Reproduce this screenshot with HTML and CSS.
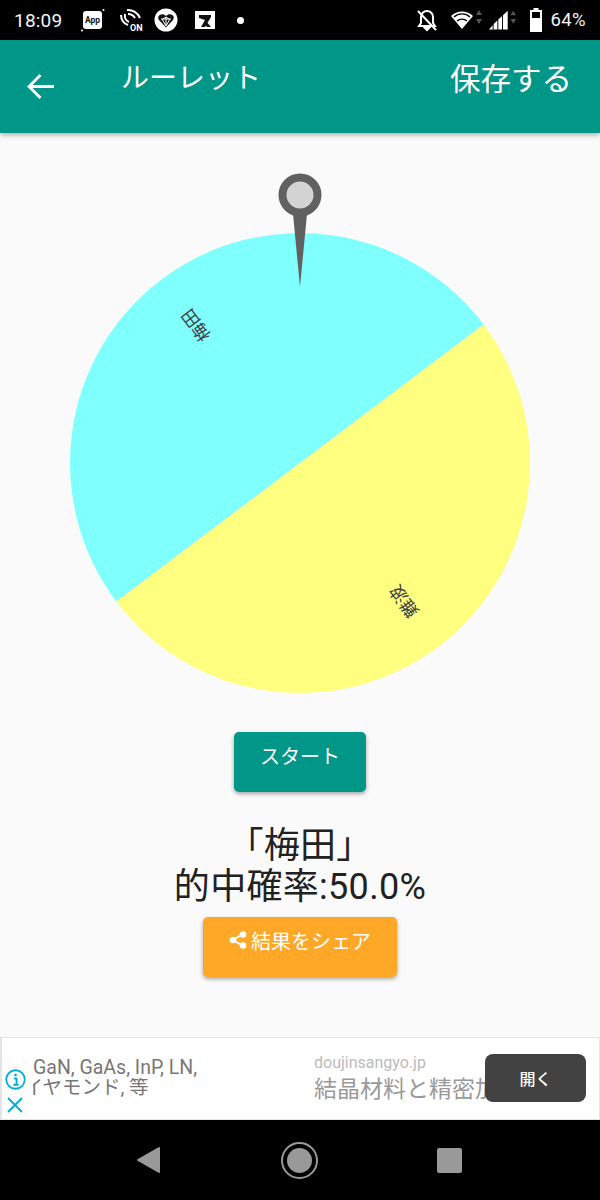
FILE: index.html
```html
<!DOCTYPE html>
<html lang="ja">
<head>
<meta charset="utf-8">
<title>ルーレット</title>
<link rel="stylesheet" href="styles.css">
</head>
<body>
<div class="phone">
  <header class="status">
    <div class="status-left">
      <span class="time">18:09</span>
      <svg class="si si-app" viewBox="0 0 24 24"><rect x="2" y="3" width="19" height="18" rx="3" fill="#fff"/><text x="11.500" y="15" class="app-t">App</text><circle cx="22.500" cy="2" r="1" fill="#fff"/><circle cx="1" cy="22.500" r="1" fill="#fff"/></svg>
      <svg class="si si-on" viewBox="0 0 24 24"><g fill="none" stroke="#fff" stroke-width="2"><path d="M2 7a11 11 0 0 0 7 10"/><path d="M6 6a7 7 0 0 0 4 8"/><path d="M8 2a13 13 0 0 1 13 8"/><path d="M9 6a8 8 0 0 1 7 4"/></g><text x="11" y="23" class="on-t">ON</text></svg>
      <svg class="si si-heart" viewBox="0 0 24 24"><circle cx="12" cy="12" r="11.500" fill="#fff"/><path d="M12 19.500 5 12c-3-4 3-8 7-4 4-4 10 0 7 4z" fill="#111"/><path d="M12 9v9M7 11h10M8 11l4 7 4-7M12 9l-3 2M12 9l3 2" stroke="#fff" stroke-width="1" fill="none"/></svg>
      <svg class="si si-s" viewBox="0 0 24 24"><path d="M2 3h20v18H2z" fill="#fff"/><path d="M6 7h12v2l-6 10H8l4-7-6-2zM13 13l5 6h-4l-3-4z" fill="#111"/></svg>
      <span class="dot"></span>
    </div>
    <div class="status-right">
      <svg class="si si-bell" viewBox="0 0 24 24"><path d="M12 3a6 6 0 0 0-6 6v6l-2 3h16l-2-3V9a6 6 0 0 0-6-6zM10 20h4l-2 2z" fill="none" stroke="#fff" stroke-width="2"/><path d="M3 3l18 19" stroke="#fff" stroke-width="2"/></svg>
      <svg class="si si-wifi" viewBox="0 0 32 24"><path d="M11 21 0 8c6-6 16-6 22 0z" fill="#fff"/><path d="M3 9a12 12 0 0 1 16 0M6 13a8 8 0 0 1 10 0" stroke="#000" stroke-width="1.300" fill="none"/><path d="M28 2l3 5h-6zM28 16l-3-5h6z" fill="#555"/></svg>
      <svg class="si si-signal" viewBox="0 0 32 24"><path d="M1 22l4-4.500V22zM6 22v-5.700l4-3.800V22zM11 22V11.500l4-3.800V22zM16 22V6.800L21 2v20z" fill="#fff"/><path d="M27 2l3 5h-6zM27 16l-3-5h6z" fill="#555"/></svg>
      <svg class="si si-batt" viewBox="0 0 14 24"><path d="M4.500 0h5v2H13v22H1V2h3.500z" fill="#fff"/><path d="M3 4h8v6H3z" fill="#000"/></svg>
      <span class="pct">64%</span>
    </div>
  </header>

  <div class="appbar">
    <svg class="back" viewBox="0 0 28 28"><path d="M14 2 2 14l12 12M2 14h26" fill="none" stroke="#fff" stroke-width="3"/></svg>
    <h1 class="title">ルーレット</h1>
    <span class="save">保存する</span>
  </div>

  <main class="content">
    <svg class="wheel" viewBox="70 172 460 521">
      <path d="M300 463 L483.600 324.500 A100 100 0 0 0 116.400 601.500 Z" fill="#80ffff"/>
      <path d="M300 463 L116.400 601.500 A100 100 0 0 0 483.600 324.500 Z" fill="#ffff80"/>
      <text class="seg" transform="translate(195 326) rotate(233)">梅田</text>
      <text class="seg" transform="translate(403 602) rotate(233)">難波</text>
      <path d="M293 214 L300 287 L307 214 Z" fill="#616161"/>
      <circle cx="300" cy="195" r="17.500" fill="#d3d3d3" stroke="#616161" stroke-width="8"/>
    </svg>
    <button class="btn btn-start">スタート</button>
    <p class="result">「梅田」<br>的中確率:50.0%</p>
    <button class="btn btn-share">
      <svg class="share" viewBox="0 0 18 18"><path d="M14 3 4 9l10 6" fill="none" stroke="#fff" stroke-width="2"/><circle cx="14" cy="3.500" r="3.300" fill="#fff"/><circle cx="4" cy="9" r="3.300" fill="#fff"/><circle cx="14" cy="14.500" r="3.300" fill="#fff"/></svg>
      結果をシェア
    </button>
  </main>

  <aside class="ad">
    <div class="ad-icons">
      <svg class="ad-i" viewBox="0 0 20 20"><circle cx="10" cy="10" r="8.800" fill="none" stroke="#00add8" stroke-width="1.700"/><path d="M8.500 9h2.500v6M8 15h5" fill="none" stroke="#00add8" stroke-width="1.800"/><circle cx="10" cy="5.800" r="1.300" fill="#00add8"/></svg>
      <svg class="ad-x" viewBox="0 0 16 16"><path d="M1 1l14 14M15 1 1 15" stroke="#00add8" stroke-width="1.800"/></svg>
    </div>
    <div class="ad-copy">
      <div class="ad-line">GaN, GaAs, InP, LN,</div>
      <div class="ad-clip"><div class="ad-line ad-cut">ダイヤモンド, 等</div></div>
    </div>
    <div class="ad-main">
      <div class="ad-domain">doujinsangyo.jp</div>
      <div class="ad-head">結晶材料と精密加工</div>
    </div>
    <button class="ad-open">開く</button>
  </aside>

  <nav class="navbar">
    <svg class="nav-back" viewBox="0 0 24 28"><path d="M23 2v24L2 14z" fill="#999" stroke="#999" stroke-width="2" stroke-linejoin="round"/></svg>
    <span class="nav-home"><span class="nav-home-in"></span></span>
    <span class="nav-square"></span>
  </nav>
</div>
</body>
</html>
```
FILE: styles.css
```css
* { box-sizing: border-box; }
html, body { margin: 0; padding: 0; }
body { font-family: Roboto, "Noto Sans CJK JP", sans-serif; background: #000; }
.phone { width: 600px; height: 1200px; display: flex; flex-direction: column; overflow: hidden; background: #fafafa; }

.status { height: 40px; flex: none; background: #000; color: #f4f4f4; display: flex; justify-content: space-between; align-items: center; padding: 0 14px; }
.status-left, .status-right { display: flex; align-items: center; }
.time { font-size: 19px; letter-spacing: 0.2px; margin-right: 67px; width: 0; white-space: nowrap; }
.si { display: block; flex: none; }
.si-app { width: 24px; height: 24px; margin-right: 14px; }
.si-on { width: 24px; height: 24px; margin-right: 11px; }
.si-heart { width: 24px; height: 24px; margin-right: 15px; }
.si-s { width: 24px; height: 24px; margin-right: 20px; }
.app-t { font: 700 8.500px Roboto, sans-serif; fill: #111; text-anchor: middle; }
.on-t { font: 700 9px Roboto, sans-serif; fill: #fff; }
.dot { width: 7px; height: 7px; border-radius: 50%; background: #fff; }
.si-bell { width: 24px; height: 24px; margin-right: 12px; }
.si-wifi { width: 32px; height: 24px; margin-right: 5px; }
.si-signal { width: 30px; height: 24px; margin-right: 11px; }
.si-batt { width: 14px; height: 24px; margin-right: 7px; }
.pct { font-size: 18.500px; letter-spacing: 0.400px; }

.appbar { height: 93px; flex: none; background: #009688; color: #fff; display: flex; align-items: flex-start; padding: 0 28px 0 27px; box-shadow: 0 2px 5px rgba(0,0,0,.3); position: relative; }
.back { width: 27px; height: 27px; margin: 33px 67px 0 0; flex: none; }
.title { font-size: 28px; font-weight: 400; margin: 17px 0 0; line-height: 44px; }
.save { font-size: 30.500px; margin: 18px 0 0 auto; line-height: 44px; }

.content { flex: 1; display: flex; flex-direction: column; align-items: center; padding-top: 39px; min-height: 0; }
.wheel { width: 460px; height: 521px; display: block; flex: none; }
.seg { font: 17.500px "Noto Sans CJK JP", sans-serif; fill: #424242; text-anchor: middle; dominant-baseline: central; }
.btn { border: 0; color: #fff; border-radius: 5px; font-family: Roboto, "Noto Sans CJK JP", sans-serif; font-size: 20px; height: 60px; box-shadow: 0 2px 4px rgba(0,0,0,.35); display: flex; justify-content: center; padding: 0 0 14px; align-items: center; flex: none; }
.btn-start { width: 132px; background: #009688; margin-top: 39px; }
.result { margin: 34px 0 0; font-size: 36px; letter-spacing: 0.300px; line-height: 41px; height: 91px; text-align: center; color: #212121; flex: none; }
.btn-share { width: 194px; background: #ffa726; gap: 4px; }
.share { width: 18px; height: 18px; flex: none; }

.ad { height: 83px; flex: none; position: relative; margin-top: 60px; background: #fff; border: 1px solid #e4e4e4; border-width: 1px 1px 1px 2px; overflow: hidden; }
.ad-icons { position: absolute; left: 2px; top: 31px; display: flex; flex-direction: column; align-items: center; gap: 7px; width: 22px; }
.ad-i { width: 21px; height: 21px; display: block; }
.ad-x { width: 16px; height: 16px; display: block; }
.ad-copy { position: absolute; left: 31px; top: 20px; width: 180px; color: #777; font-size: 19.500px; line-height: 20px; }
.ad-clip { overflow: hidden; height: 24px; }
.ad-line { white-space: nowrap; }
.ad-cut { margin-left: -29px; }
.ad-main { position: absolute; left: 312px; top: 14px; white-space: nowrap; }
.ad-domain { color: #bbb; font-size: 16px; line-height: 22px; }
.ad-head { color: #999; font-size: 23px; line-height: 32px; font-weight: 400; }
.ad-open { position: absolute; left: 483px; top: 16px; width: 101px; height: 48px; border: 0; border-radius: 8px; background: #424242; color: #fff; font: 500 16px "Noto Sans CJK JP", sans-serif; }

.navbar { height: 80px; flex: none; background: #000; display: flex; align-items: center; position: relative; padding: 0 0 0 136px; }
.nav-back { width: 24px; height: 28px; margin-right: 121px; }
.nav-home { width: 37px; height: 37px; border-radius: 50%; border: 2px solid #999; display: flex; align-items: center; justify-content: center; margin-right: 119px; }
.nav-home-in { width: 25px; height: 25px; border-radius: 50%; background: #999; }
.nav-square { width: 25px; height: 25px; border-radius: 2px; background: #999; }
```
